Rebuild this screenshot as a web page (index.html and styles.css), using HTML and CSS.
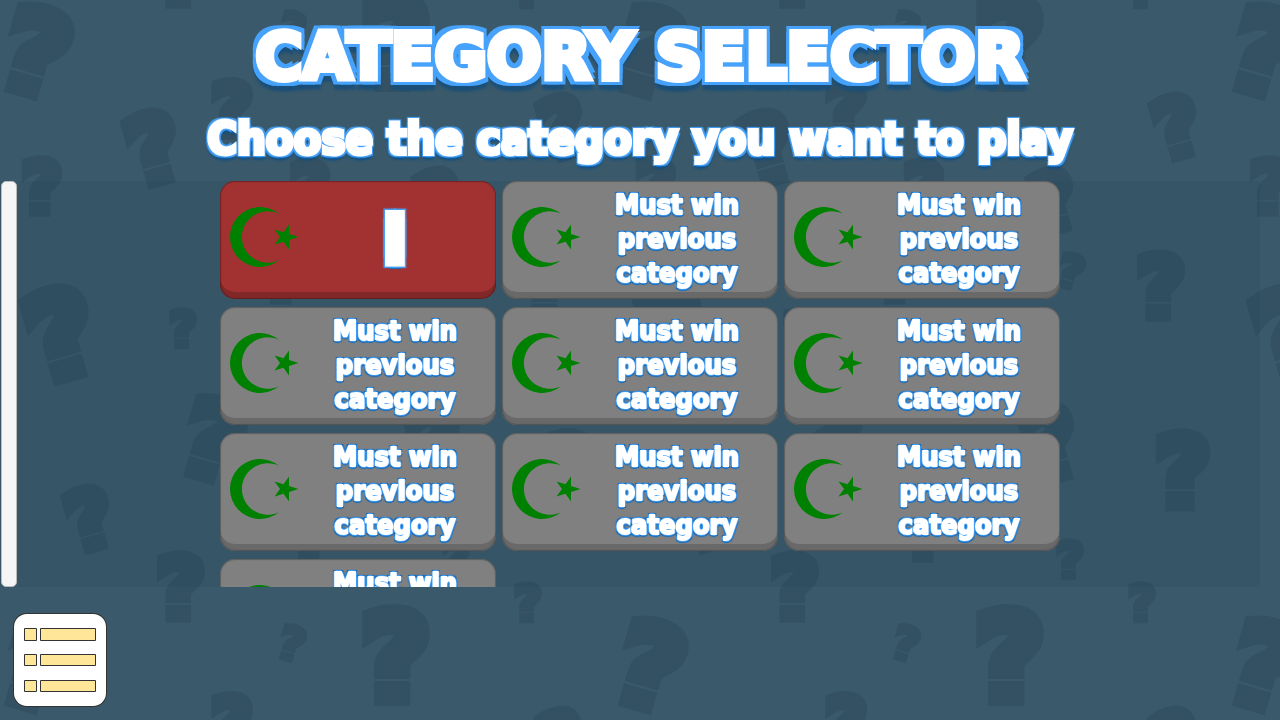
FILE: index.html
```html
<!DOCTYPE html>
<html lang="en">
<head>
    <meta charset="UTF-8">
    <meta name="viewport" content="width=device-width, initial-scale=1">
    <title>Category Selector</title>
    <link rel="stylesheet" href="styles.css">
</head>
<body>
    <!-- Question mark wallpaper -->
    <svg class="wallpaper" aria-hidden="true">
        <defs>
            <g id="mark">
                <text class="mark" y="43">?</text>
                <path class="mark-gap" d="M-26 25H20"/>
            </g>
            <g id="tile">
                <use href="#mark" transform="translate(37 51) rotate(16) scale(.95)"/>
                <use href="#mark" transform="translate(232 108) scale(.62)"/>
                <use href="#mark" transform="translate(154 147) rotate(-16) scale(.78)"/>
                <use href="#mark" transform="translate(42 186) scale(.6)"/>
                <use href="#mark" transform="translate(396 41)"/>
                <use href="#mark" transform="translate(292 29) rotate(16) scale(.38)"/>
                <use href="#mark" transform="translate(528 -12) scale(.41)"/>
                <use href="#mark" transform="translate(181 586) scale(.71)"/>
                <use href="#mark" transform="translate(563 126) rotate(-16) scale(.68)"/>
                <use href="#mark" transform="translate(61 333) rotate(-16) scale(.98)"/>
                <use href="#mark" transform="translate(183 328) scale(.41)"/>
                <use href="#mark" transform="translate(214 439) rotate(16) scale(.88)"/>
                <use href="#mark" transform="translate(90 518) rotate(-16) scale(.68)"/>
                <use href="#mark" transform="translate(457 271) rotate(16) scale(.38)"/>
                <use href="#mark" transform="translate(547 285) scale(.71)"/>
                <use href="#mark" transform="translate(569 470) scale(.81)"/>
                <use href="#mark" transform="translate(437 442) rotate(-16) scale(.82)"/>
                <use href="#mark" transform="translate(456 559) scale(.41)"/>
                <use href="#mark" transform="translate(310 188) scale(.6)"/>
                <use href="#mark" transform="translate(283 274) scale(.6)"/>
                <use href="#mark" transform="translate(311 532) scale(.6)"/>
                <use href="#mark" transform="translate(440 200) rotate(-16) scale(.68)"/>
            </g>
            <pattern id="marks" width="614" height="614" patternUnits="userSpaceOnUse">
                <use href="#tile"/>
                <use href="#tile" x="614"/>
                <use href="#tile" y="614"/>
                <use href="#tile" y="-614"/>
            </pattern>
        </defs>
        <rect width="100%" height="100%" fill="url(#marks)"/>
    </svg>

    <!-- Crescent and star used on every card -->
    <svg class="sprite" aria-hidden="true">
        <symbol id="crescent" viewBox="0 0 70 60">
            <path d="M49 6.800A30 30 0 1 0 49 53.200A25.800 25.800 0 1 1 49 6.800Z"/>
            <path d="M68.500 30L59 33.100L59 42.400L53.500 34.800L44.500 37.600L50 30L44.500 22.400L53.500 25.200L59 17.600L59 26.900Z"/>
        </symbol>
    </svg>

    <header class="header">
        <h1>CATEGORY SELECTOR</h1>
        <p>Choose the category you want to play</p>
    </header>

    <main class="categories">
        <div class="scrollbar"></div>
        <div class="scroller">
            <div class="grid">
                <button class="card open"><svg class="icon"><use href="#crescent"/></svg><span>I</span></button>
                <button class="card" disabled><svg class="icon"><use href="#crescent"/></svg><span>Must win previous category</span></button>
                <button class="card" disabled><svg class="icon"><use href="#crescent"/></svg><span>Must win previous category</span></button>
                <button class="card" disabled><svg class="icon"><use href="#crescent"/></svg><span>Must win previous category</span></button>
                <button class="card" disabled><svg class="icon"><use href="#crescent"/></svg><span>Must win previous category</span></button>
                <button class="card" disabled><svg class="icon"><use href="#crescent"/></svg><span>Must win previous category</span></button>
                <button class="card" disabled><svg class="icon"><use href="#crescent"/></svg><span>Must win previous category</span></button>
                <button class="card" disabled><svg class="icon"><use href="#crescent"/></svg><span>Must win previous category</span></button>
                <button class="card" disabled><svg class="icon"><use href="#crescent"/></svg><span>Must win previous category</span></button>
                <button class="card" disabled><svg class="icon"><use href="#crescent"/></svg><span>Must win previous category</span></button>
            </div>
        </div>
    </main>

    <footer class="footer">
        <button class="menu" aria-label="Menu">
            <svg viewBox="0 0 92 92">
                <path d="M10.500 14.500h12v12h-12zM26.500 14.500h55v12h-55zM10.500 40.500h12v11h-12zM26.500 40.500h55v11h-55zM10.500 66.500h12v11h-12zM26.500 66.500h55v11h-55z"/>
            </svg>
        </button>
    </footer>
</body>
</html>
```
FILE: styles.css
```css
:root {
    --background: #3a5a6b;
    --mark: #335163;
    --outline: #46a2fa;
    --outline-dark: #1668b4;
    --wide: "DejaVu Sans", Verdana, sans-serif;
}

* {
    margin: 0;
    padding: 0;
    box-sizing: border-box;
    font-family: "DejaVu Sans Condensed", Tahoma, sans-serif;
}

body {
    display: flex;
    flex-direction: column;
    height: 100vh;
    overflow: hidden;
    background: var(--background);
    color: white;
    font-weight: bold;
}

.wallpaper {
    position: fixed;
    inset: 0;
    width: 100%;
    height: 100%;
    z-index: -1;
}

.mark {
    font-family: var(--wide);
    font-size: 116px;
    font-weight: bold;
    text-anchor: middle;
    fill: var(--mark);
    stroke: var(--mark);
    stroke-width: 16px;
}

.mark-gap {
    stroke: var(--background);
    stroke-width: 2px;
}

.sprite {
    position: absolute;
    width: 0;
    height: 0;
}

.header {
    padding: 12px 0;
    text-align: center;
}

.header h1 {
    font-family: var(--wide);
    font-size: 64px;
    line-height: 90px;
    -webkit-text-stroke: 6px white;
    text-shadow:
        -6px 0 0 var(--outline),
        6px 0 0 var(--outline),
        0 -6px 0 var(--outline),
        0 6px 0 var(--outline),
        -6px -6px 0 var(--outline),
        6px -6px 0 var(--outline),
        -6px 6px 0 var(--outline),
        6px 6px 0 var(--outline),
        5px 11px 3px #1b4f78,
        -5px 11px 3px #1b4f78;
}

.header p {
    margin-top: 7px;
    font-size: 45px;
    line-height: 60px;
    -webkit-text-stroke: 4px white;
    text-shadow:
        -3px -3px 1px var(--outline),
        3px -3px 1px var(--outline),
        -3px 3px 1px var(--outline),
        3px 3px 1px var(--outline),
        -3px 0 1px var(--outline-dark),
        3px 0 1px var(--outline-dark),
        0 -3px 1px var(--outline-dark),
        0 4px 1px var(--outline-dark),
        2px 5px 3px #0c4d86,
        -2px 5px 3px #0c4d86;
}

.categories {
    display: flex;
    flex: 1;
    min-height: 0;
    margin-right: 20px;
    background: rgba(20, 60, 70, 0.1);
}

.scrollbar {
    width: 16px;
    margin: 0 3px 0 1px;
    background: #f5f5f5;
    border: 1px solid #bbb;
    border-radius: 5px;
}

.scroller {
    flex: 1;
    overflow-y: auto;
    scrollbar-width: none;
}

.grid {
    display: grid;
    grid-template-columns: repeat(3, 276px);
    grid-auto-rows: 118px;
    gap: 8px 6px;
    justify-content: center;
}

.card {
    display: flex;
    align-items: center;
    padding: 0 6px 0 10px;
    background: #808080;
    border: none;
    border-radius: 15px;
    box-shadow: inset 0 0 1px 1px rgba(60, 60, 60, 0.5), inset 0 -7px 0 #696969;
    color: white;
    font-size: 27px;
    font-weight: bold;
    line-height: 34px;
}

.card span {
    flex: 1;
    margin-bottom: 2px;
    padding: 0 30px;
    -webkit-text-stroke: 2px white;
    text-shadow:
        -2px 0 1px var(--outline),
        2px 0 1px var(--outline),
        0 -2px 1px var(--outline),
        0 2px 1px var(--outline),
        -2px -2px 1px var(--outline-dark),
        2px -2px 1px var(--outline-dark),
        -2px 2px 1px var(--outline-dark),
        2px 2px 1px var(--outline-dark),
        0 3px 1px var(--outline-dark);
}

.card.open {
    background: #a23232;
    box-shadow: inset 0 0 1px 1px rgba(60, 20, 20, 0.5), inset 0 -7px 0 #822828;
    cursor: pointer;
}

.card.open span {
    margin: 0;
    font-family: var(--wide);
    font-size: 68px;
    line-height: 84px;
    -webkit-text-stroke: 7px white;
    text-shadow:
        -5px -5px 1px var(--outline),
        5px -5px 1px var(--outline),
        -5px 5px 1px var(--outline),
        5px 5px 1px var(--outline),
        0 6px 1px var(--outline-dark);
}

.icon {
    width: 70px;
    height: 60px;
    margin-bottom: 6px;
    fill: #008000;
}

.footer {
    padding: 27px 14px 14px;
}

.menu {
    display: block;
    width: 92px;
    height: 92px;
    background: white;
    border: none;
    border-radius: 13px;
    box-shadow: 0 0 0 1px #333;
    cursor: pointer;
}

.menu svg {
    display: block;
    fill: #ffe699;
    stroke: #333;
    stroke-width: 1;
}
```
